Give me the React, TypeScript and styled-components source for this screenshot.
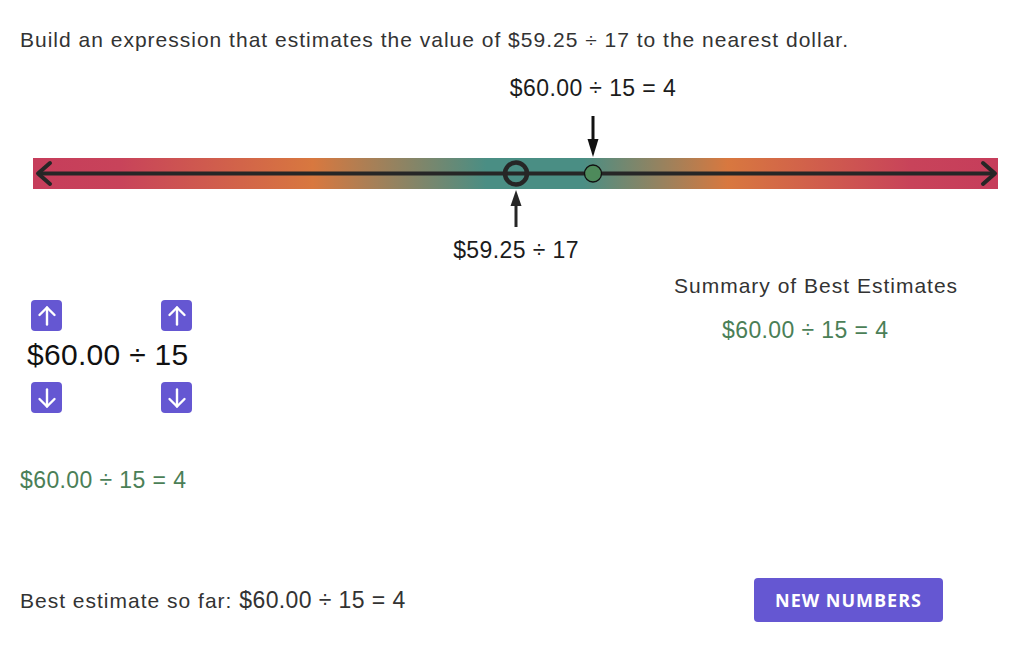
import React from 'react';
import styled, { createGlobalStyle } from 'styled-components';

const Global = createGlobalStyle`
  html, body { margin: 0; padding: 0; background: #ffffff; }
  body { font-family: "Liberation Sans", Arial, sans-serif; color: #333333; }
`;

const Page = styled.div`
  width: 1032px;
  height: 645px;
  display: flex;
  flex-direction: column;
  overflow: hidden;
`;

const Prompt = styled.div`
  margin: 28px 0 0 20px;
  font-size: 21px;
  letter-spacing: 1px;
  line-height: 24px;
  color: #333333;
  white-space: nowrap;
`;

const LineArea = styled.div`
  position: relative;
  margin-top: 18px;
  height: 200px;
`;

const Canvas = styled.svg`
  position: absolute;
  left: 0;
  top: 0;
`;

const PointLabel = styled.div<{ $x: number; $top: number }>`
  position: absolute;
  left: ${(p) => p.$x}px;
  top: ${(p) => p.$top}px;
  transform: translateX(-50%);
  white-space: nowrap;
  font-size: 23px;
  letter-spacing: 0.4px;
  line-height: 28px;
  color: #1c1c1c;
`;

const Workspace = styled.div`
  display: flex;
  height: 308px;
`;

const Builder = styled.div`
  width: 600px;
  display: flex;
  flex-direction: column;
`;

const ButtonRow = styled.div<{ $mt: number }>`
  display: flex;
  gap: 99px;
  margin: ${(p) => p.$mt}px 0 0 31px;
`;

const StepButton = styled.button`
  width: 31px;
  height: 31px;
  padding: 0;
  border: none;
  border-radius: 4px;
  background: #6557d2;
  display: flex;
  align-items: center;
  justify-content: center;
  cursor: pointer;
`;

const Expression = styled.div`
  margin: 6px 0 9px 27px;
  font-size: 30px;
  letter-spacing: 0.3px;
  line-height: 36px;
  height: 36px;
  color: #111111;
`;

const Result = styled.div<{ $mt?: number; $ml?: number }>`
  margin: ${(p) => p.$mt ?? 0}px 0 0 ${(p) => p.$ml ?? 0}px;
  font-size: 23px;
  letter-spacing: 0.4px;
  line-height: 28px;
  color: #4b7f57;
  white-space: nowrap;
`;

const Summary = styled.div`
  display: flex;
  flex-direction: column;
  padding-top: 4px;
`;

const SummaryTitle = styled.div`
  margin-left: 74px;
  font-size: 21px;
  letter-spacing: 1px;
  line-height: 24px;
  color: #333333;
  white-space: nowrap;
`;

const Footer = styled.div`
  display: flex;
  align-items: center;
  justify-content: space-between;
  padding: 0 89px 0 20px;
`;

const FooterText = styled.div`
  font-size: 21px;
  letter-spacing: 1px;
  line-height: 28px;
  color: #333333;
  white-space: nowrap;
`;

const MathSpan = styled.span`
  font-size: 23px;
  letter-spacing: 0.4px;
`;

const PrimaryButton = styled.button`
  width: 189px;
  height: 44px;
  border: none;
  border-radius: 4px;
  background: #6557d2;
  color: #ffffff;
  font-family: "Open Sans", "Noto Sans", sans-serif;
  font-weight: 700;
  font-size: 18px;
  letter-spacing: 1px;
  cursor: pointer;
`;

const Arrow = ({ down }: { down?: boolean }) => (
  <svg width="24" height="24" viewBox="0 0 24 24" fill="none" stroke="#ffffff" strokeWidth="2.4" strokeLinecap="round" strokeLinejoin="round">
    {down ? (
      <>
        <path d="M12 3.5V20.5" />
        <path d="M4.5 13L12 20.5L19.5 13" />
      </>
    ) : (
      <>
        <path d="M12 20.5V3.5" />
        <path d="M4.5 11L12 3.5L19.5 11" />
      </>
    )}
  </svg>
);

const NumberLine = () => (
  <Canvas width="1032" height="200" viewBox="0 0 1032 200">
    <defs>
      <linearGradient id="band" x1="0" x2="1" y1="0" y2="0">
        <stop offset="0" stopColor="#c63d5b" />
        <stop offset="0.09" stopColor="#c8435a" />
        <stop offset="0.29" stopColor="#d8783f" />
        <stop offset="0.47" stopColor="#4a8e84" />
        <stop offset="0.57" stopColor="#4a8e84" />
        <stop offset="0.72" stopColor="#d8783f" />
        <stop offset="0.91" stopColor="#c8435a" />
        <stop offset="1" stopColor="#c63d5b" />
      </linearGradient>
    </defs>
    <rect x="33" y="88" width="965" height="31" fill="url(#band)" />
    <line x1="38" y1="103.5" x2="995" y2="103.5" stroke="#262626" strokeWidth="4" />
    <path d="M50 93L38 103.5L50 114" fill="none" stroke="#262626" strokeWidth="4" strokeLinecap="round" strokeLinejoin="round" />
    <path d="M983 93L995 103.5L983 114" fill="none" stroke="#262626" strokeWidth="4" strokeLinecap="round" strokeLinejoin="round" />
    <circle cx="516" cy="103.5" r="11" fill="none" stroke="#262626" strokeWidth="4.5" />
    <circle cx="593" cy="103.5" r="8.5" fill="#4e8a5b" stroke="#111111" strokeWidth="1.3" />
    <line x1="593" y1="46" x2="593" y2="72" stroke="#111111" strokeWidth="3" />
    <polygon points="587.5,69 598.5,69 593,87" fill="#111111" />
    <line x1="516" y1="157" x2="516" y2="133" stroke="#262626" strokeWidth="3" />
    <polygon points="510.5,136 521.5,136 516,120" fill="#262626" />
  </Canvas>
);

export default function App() {
  return (
    <Page>
      <Global />
      <Prompt>Build an expression that estimates the value of $59.25 ÷ 17 to the nearest dollar.</Prompt>
      <LineArea>
        <NumberLine />
        <PointLabel $x={593} $top={4}>$60.00 ÷ 15 = 4</PointLabel>
        <PointLabel $x={516} $top={166}>$59.25 ÷ 17</PointLabel>
      </LineArea>
      <Workspace>
        <Builder>
          <ButtonRow $mt={30}>
            <StepButton aria-label="increase dollars"><Arrow /></StepButton>
            <StepButton aria-label="increase divisor"><Arrow /></StepButton>
          </ButtonRow>
          <Expression>$60.00 ÷ 15</Expression>
          <ButtonRow $mt={0}>
            <StepButton aria-label="decrease dollars"><Arrow down /></StepButton>
            <StepButton aria-label="decrease divisor"><Arrow down /></StepButton>
          </ButtonRow>
          <Result $mt={53} $ml={20}>$60.00 ÷ 15 = 4</Result>
        </Builder>
        <Summary>
          <SummaryTitle>Summary of Best Estimates</SummaryTitle>
          <Result $mt={18} $ml={122}>$60.00 ÷ 15 = 4</Result>
        </Summary>
      </Workspace>
      <Footer>
        <FooterText>
          Best estimate so far: <MathSpan>$60.00 ÷ 15 = 4</MathSpan>
        </FooterText>
        <PrimaryButton>NEW NUMBERS</PrimaryButton>
      </Footer>
    </Page>
  );
}
